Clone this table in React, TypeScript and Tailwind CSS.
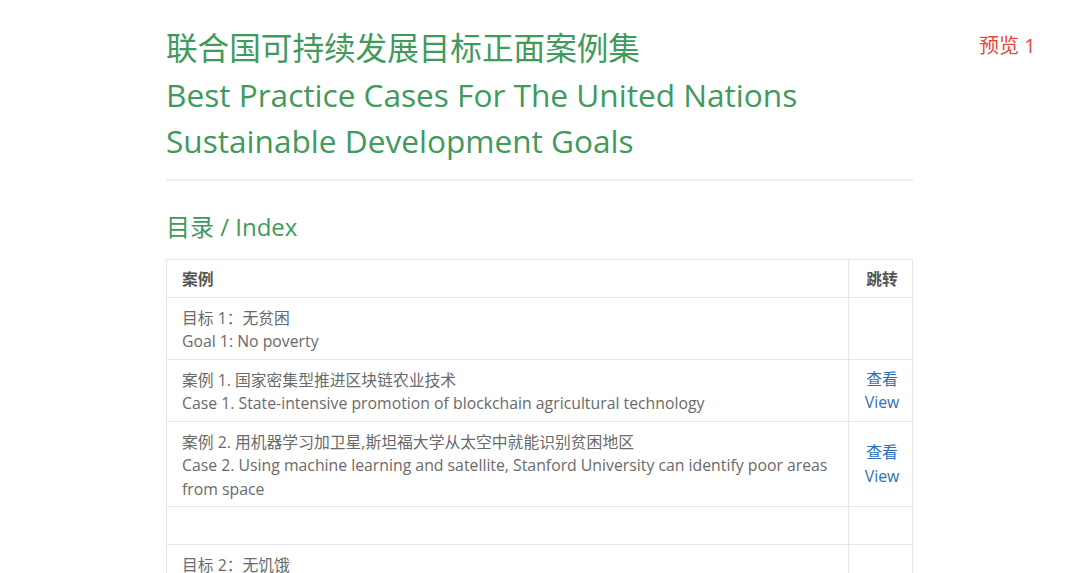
import React from "react";

type Row = {
  zh: string;
  en: string;
  link?: boolean;
  empty?: boolean;
};

const rows: Row[] = [
  { zh: "目标 1：无贫困", en: "Goal 1: No poverty" },
  {
    zh: "案例 1. 国家密集型推进区块链农业技术",
    en: "Case 1. State-intensive promotion of blockchain agricultural technology",
    link: true,
  },
  {
    zh: "案例 2. 用机器学习加卫星,斯坦福大学从太空中就能识别贫困地区",
    en: "Case 2. Using machine learning and satellite, Stanford University can identify poor areas from space",
    link: true,
  },
  { zh: "", en: "", empty: true },
  { zh: "目标 2：无饥饿", en: "Goal 2: Zero hunger" },
];

export default function App() {
  return (
    <div
      className="relative h-[573px] w-[1080px] overflow-hidden bg-white"
      style={{ fontFamily: '"Open Sans", "Noto Sans CJK SC", sans-serif' }}
    >
      {/* Preview tag */}
      <div className="absolute left-[979px] top-[31px] text-[20px] text-[#e8473a]">预览 1</div>

      <div className="ml-[166px] w-[747px] pt-[25px]">
        {/* Title */}
        <h1 className="text-[31.6px] leading-[46.5px] text-[#3f9a5c]">
          联合国可持续发展目标正面案例集
          <br />
          Best Practice Cases For The United Nations
          <br />
          Sustainable Development Goals
        </h1>
        <div className="mt-[14px] h-[2px] bg-[#eeeeee]" />

        <h2 className="mt-[29px] text-[24px] leading-[34px] text-[#3f9a5c]">目录 / Index</h2>

        {/* Index table */}
        <table className="mt-[15px] w-full border-collapse text-[15.8px] leading-[23.5px] text-[#6a6a6a]">
          <thead>
            <tr>
              <th className="h-[38px] border border-[#e6e6e6] px-[15px] pt-[3px] text-left font-bold text-[#555]">
                案例
              </th>
              <th className="w-[64px] border border-[#e6e6e6] pt-[3px] pl-[3px] text-center font-bold text-[#555]">
                跳转
              </th>
            </tr>
          </thead>
          <tbody>
            {rows.map((r, i) => (
              <tr key={i}>
                <td
                  className={
                    r.empty
                      ? "h-[38px] border border-[#e6e6e6] px-[15px]"
                      : "border border-[#e6e6e6] px-[15px] pt-[9px] pb-[5px] align-top"
                  }
                >
                  {!r.empty && (
                    <>
                      <div>{r.zh}</div>
                      <div>{r.en}</div>
                    </>
                  )}
                </td>
                <td className="border border-[#e6e6e6] pl-[3px] pt-[2px] text-center align-middle text-[#2f6fba]">
                  {r.link && (
                    <>
                      <div>查看</div>
                      <div>View</div>
                    </>
                  )}
                </td>
              </tr>
            ))}
          </tbody>
        </table>
      </div>
    </div>
  );
}
